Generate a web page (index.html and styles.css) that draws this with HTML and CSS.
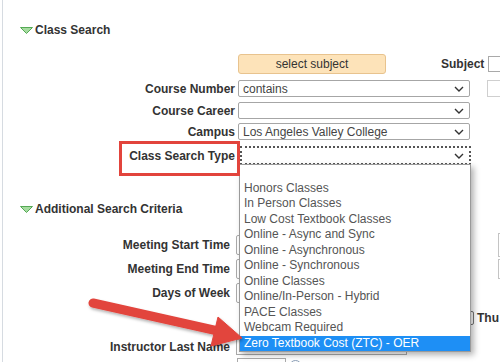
FILE: index.html
```html
<!DOCTYPE html>
<html lang="en">
<head>
    <meta charset="UTF-8">
    <title>Class Search</title>
    <link rel="stylesheet" href="styles.css">
</head>
<body>
    <div class="page">
        <!-- Class Search -->
        <h2 class="sec-head">
            <svg class="tri" width="13" height="7" viewBox="0 0 13 7"><polygon points="0.5,0.5 12.5,0.5 6.5,6.5" fill="#a6dca0" stroke="#55a955" stroke-width="1"/></svg>
            Class Search
        </h2>

        <div class="row row-btn">
            <span class="lbl"></span>
            <button class="subject-btn">select subject</button>
            <span class="subject-lbl">Subject</span>
            <span class="box-right"></span>
        </div>

        <div class="row row-cn">
            <span class="lbl">Course Number</span>
            <div class="select"><span>contains</span><svg class="chev" width="10" height="6" viewBox="0 0 10 6"><polyline points="1,1 5,5 9,1" fill="none" stroke="#333" stroke-width="1.4"/></svg></div>
            <span class="box-right light"></span>
        </div>

        <div class="row row-cc">
            <span class="lbl">Course Career</span>
            <div class="select"><span></span><svg class="chev" width="10" height="6" viewBox="0 0 10 6"><polyline points="1,1 5,5 9,1" fill="none" stroke="#333" stroke-width="1.4"/></svg></div>
        </div>

        <div class="row row-campus">
            <span class="lbl">Campus</span>
            <div class="select"><span>Los Angeles Valley College</span><svg class="chev" width="10" height="6" viewBox="0 0 10 6"><polyline points="1,1 5,5 9,1" fill="none" stroke="#333" stroke-width="1.4"/></svg></div>
        </div>

        <div class="row row-cst">
            <span class="lbl">Class Search Type</span>
            <div class="select focused"><span></span><svg class="chev" width="10" height="6" viewBox="0 0 10 6"><polyline points="1,1 5,5 9,1" fill="none" stroke="#333" stroke-width="1.4"/></svg></div>
        </div>

        <!-- Additional Search Criteria -->
        <h2 class="sec-head sec-two">
            <svg class="tri" width="13" height="7" viewBox="0 0 13 7"><polygon points="0.5,0.5 12.5,0.5 6.5,6.5" fill="#a6dca0" stroke="#55a955" stroke-width="1"/></svg>
            Additional Search Criteria
        </h2>

        <div class="row row-time">
            <span class="lbl lbl2">Meeting Start Time</span>
            <span class="field-sm"></span>
            <span class="edge-box tall"></span>
        </div>

        <div class="row row-time">
            <span class="lbl lbl2">Meeting End Time</span>
            <span class="field-sm"></span>
            <span class="edge-box"></span>
        </div>

        <div class="row row-time">
            <span class="lbl lbl2">Days of Week</span>
            <span class="field-sm"></span>
        </div>

        <div class="row row-days">
            <span class="check"></span>
            <span class="day">Thu</span>
        </div>

        <div class="row row-instr">
            <span class="lbl lbl2">Instructor Last Name</span>
            <span class="field-name"></span>
        </div>

        <div class="row row-last">
            <span class="field-tiny"></span>
            <span class="help"></span>
        </div>
    </div>

    <!-- Open dropdown list -->
    <ul class="dropdown">
        <li>&nbsp;</li>
        <li>Honors Classes</li>
        <li>In Person Classes</li>
        <li>Low Cost Textbook Classes</li>
        <li>Online - Async and Sync</li>
        <li>Online - Asynchronous</li>
        <li>Online - Synchronous</li>
        <li>Online Classes</li>
        <li>Online/In-Person - Hybrid</li>
        <li>PACE Classes</li>
        <li>Webcam Required</li>
        <li class="selected">Zero Textbook Cost (ZTC) - OER</li>
    </ul>

    <!-- Annotations -->
    <div class="callout"></div>
    <svg class="arrow" width="500" height="362" viewBox="0 0 500 362">
        <defs>
            <filter id="sh" x="-10%" y="-10%" width="130%" height="140%">
                <feDropShadow dx="1" dy="2" stdDeviation="1.5" flood-color="#000" flood-opacity="0.3"/>
            </filter>
        </defs>
        <g filter="url(#sh)" fill="#e2443c" stroke="#e2443c">
            <line x1="93" y1="303" x2="218" y2="331" stroke-width="9" stroke-linecap="round"/>
            <polygon points="242,338 218,317 211,346" stroke-width="1" stroke-linejoin="round"/>
        </g>
    </svg>
</body>
</html>
```

FILE: styles.css
```css
/* General */
body {
    margin: 0;
    font-family: "Liberation Sans", Arial, sans-serif;
    font-size: 12px;
    color: #333;
    background: #fff;
    position: relative;
    width: 500px;
    height: 362px;
    overflow: hidden;
}

.page {
    margin-left: 2px;
    border-left: 1px solid #d6dbe1;
    height: 362px;
    padding-top: 22px;
    box-sizing: border-box;
}

/* Section headings */
.sec-head {
    margin: 0;
    padding-left: 17px;
    font-size: 12px;
    font-weight: bold;
    line-height: 16px;
    display: flex;
    align-items: center;
    gap: 2px;
}

.sec-two {
    margin-top: 36px;
}

/* Rows */
.row {
    display: flex;
    align-items: center;
}

.lbl {
    flex: none;
    width: 232px;
    margin-right: 3px;
    text-align: right;
    font-weight: bold;
}

.lbl2 {
    width: 227px;
    margin-right: 6px;
}

.row-btn { margin-top: 16px; }
.row-cn { margin-top: 6px; }
.row-cc { margin-top: 5px; }
.row-campus { margin-top: 4px; }
.row-cst { margin-top: 6px; }

/* Select subject button */
.subject-btn {
    flex: none;
    width: 148px;
    height: 20px;
    padding: 0;
    border: 1px solid #e8c38e;
    border-radius: 3px;
    background: #fde3b9;
    font-family: inherit;
    font-size: 12px;
    color: #333;
}

.subject-lbl {
    margin-left: 55px;
    font-weight: bold;
}

.box-right {
    flex: none;
    width: 20px;
    height: 14px;
    margin-left: 4px;
    border: 1px solid #a9a9a9;
}

.row-cn .box-right {
    margin-left: 17px;
    height: 15px;
}

.box-right.light {
    border-color: #cfcfcf;
}

/* Drop-down boxes */
.select {
    flex: none;
    width: 232px;
    height: 17px;
    box-sizing: border-box;
    border: 1px solid #a6a6a6;
    border-radius: 2px;
    padding: 0 5px 0 4px;
    display: flex;
    align-items: center;
    justify-content: space-between;
    color: #444;
    background: #fff;
}

.select.focused {
    width: 231px;
    height: 19px;
    margin-left: 2px;
    border: 2px dotted #555;
    border-radius: 0;
}

/* Additional criteria fields */
.row-time {
    height: 20px;
    margin-top: 4px;
}

.sec-two + .row-time {
    margin-top: 18px;
}

.field-sm {
    flex: none;
    width: 60px;
    height: 18px;
    border: 1px solid #aaa;
    border-radius: 2px;
}

.edge-box {
    flex: none;
    width: 20px;
    height: 18px;
    margin-left: 200px;
    border: 1px solid #c4c4c4;
}

.edge-box.tall {
    height: 22px;
}

.row-days {
    height: 20px;
    margin-top: 5px;
}

.check {
    flex: none;
    width: 11px;
    height: 12px;
    margin-left: 458px;
    border: 1px solid #777;
    border-radius: 2px;
}

.day {
    margin-left: 3px;
    font-weight: bold;
}

.row-instr {
    height: 20px;
    margin-top: 9px;
}

.field-name {
    flex: none;
    width: 169px;
    height: 14px;
    border: 1px solid #aaa;
}

.row-last {
    margin-top: 1px;
}

.field-tiny {
    flex: none;
    width: 47px;
    height: 14px;
    margin-left: 234px;
    border: 1px solid #aaa;
}

.help {
    flex: none;
    width: 11px;
    height: 11px;
    margin-left: 3px;
    border: 1px solid #8ca0b8;
    border-radius: 50%;
}

/* Open list */
.dropdown {
    position: absolute;
    left: 239px;
    top: 164px;
    width: 232px;
    margin: 0;
    padding: 0;
    list-style: none;
    box-sizing: border-box;
    border: 1px solid #9a9a9a;
    background: #fff;
    box-shadow: 3px 3px 6px rgba(0, 0, 0, 0.3);
    color: #555;
}

.dropdown li {
    line-height: 15.5px;
    padding-left: 4px;
    white-space: nowrap;
}

.dropdown li.selected {
    background: #1e8ff5;
    color: #fff;
}

/* Annotations */
.callout {
    position: absolute;
    left: 119px;
    top: 141px;
    width: 121px;
    height: 35px;
    box-sizing: border-box;
    border: 3px solid #e2443c;
}

.arrow {
    position: absolute;
    left: 0;
    top: 0;
    pointer-events: none;
}
```
